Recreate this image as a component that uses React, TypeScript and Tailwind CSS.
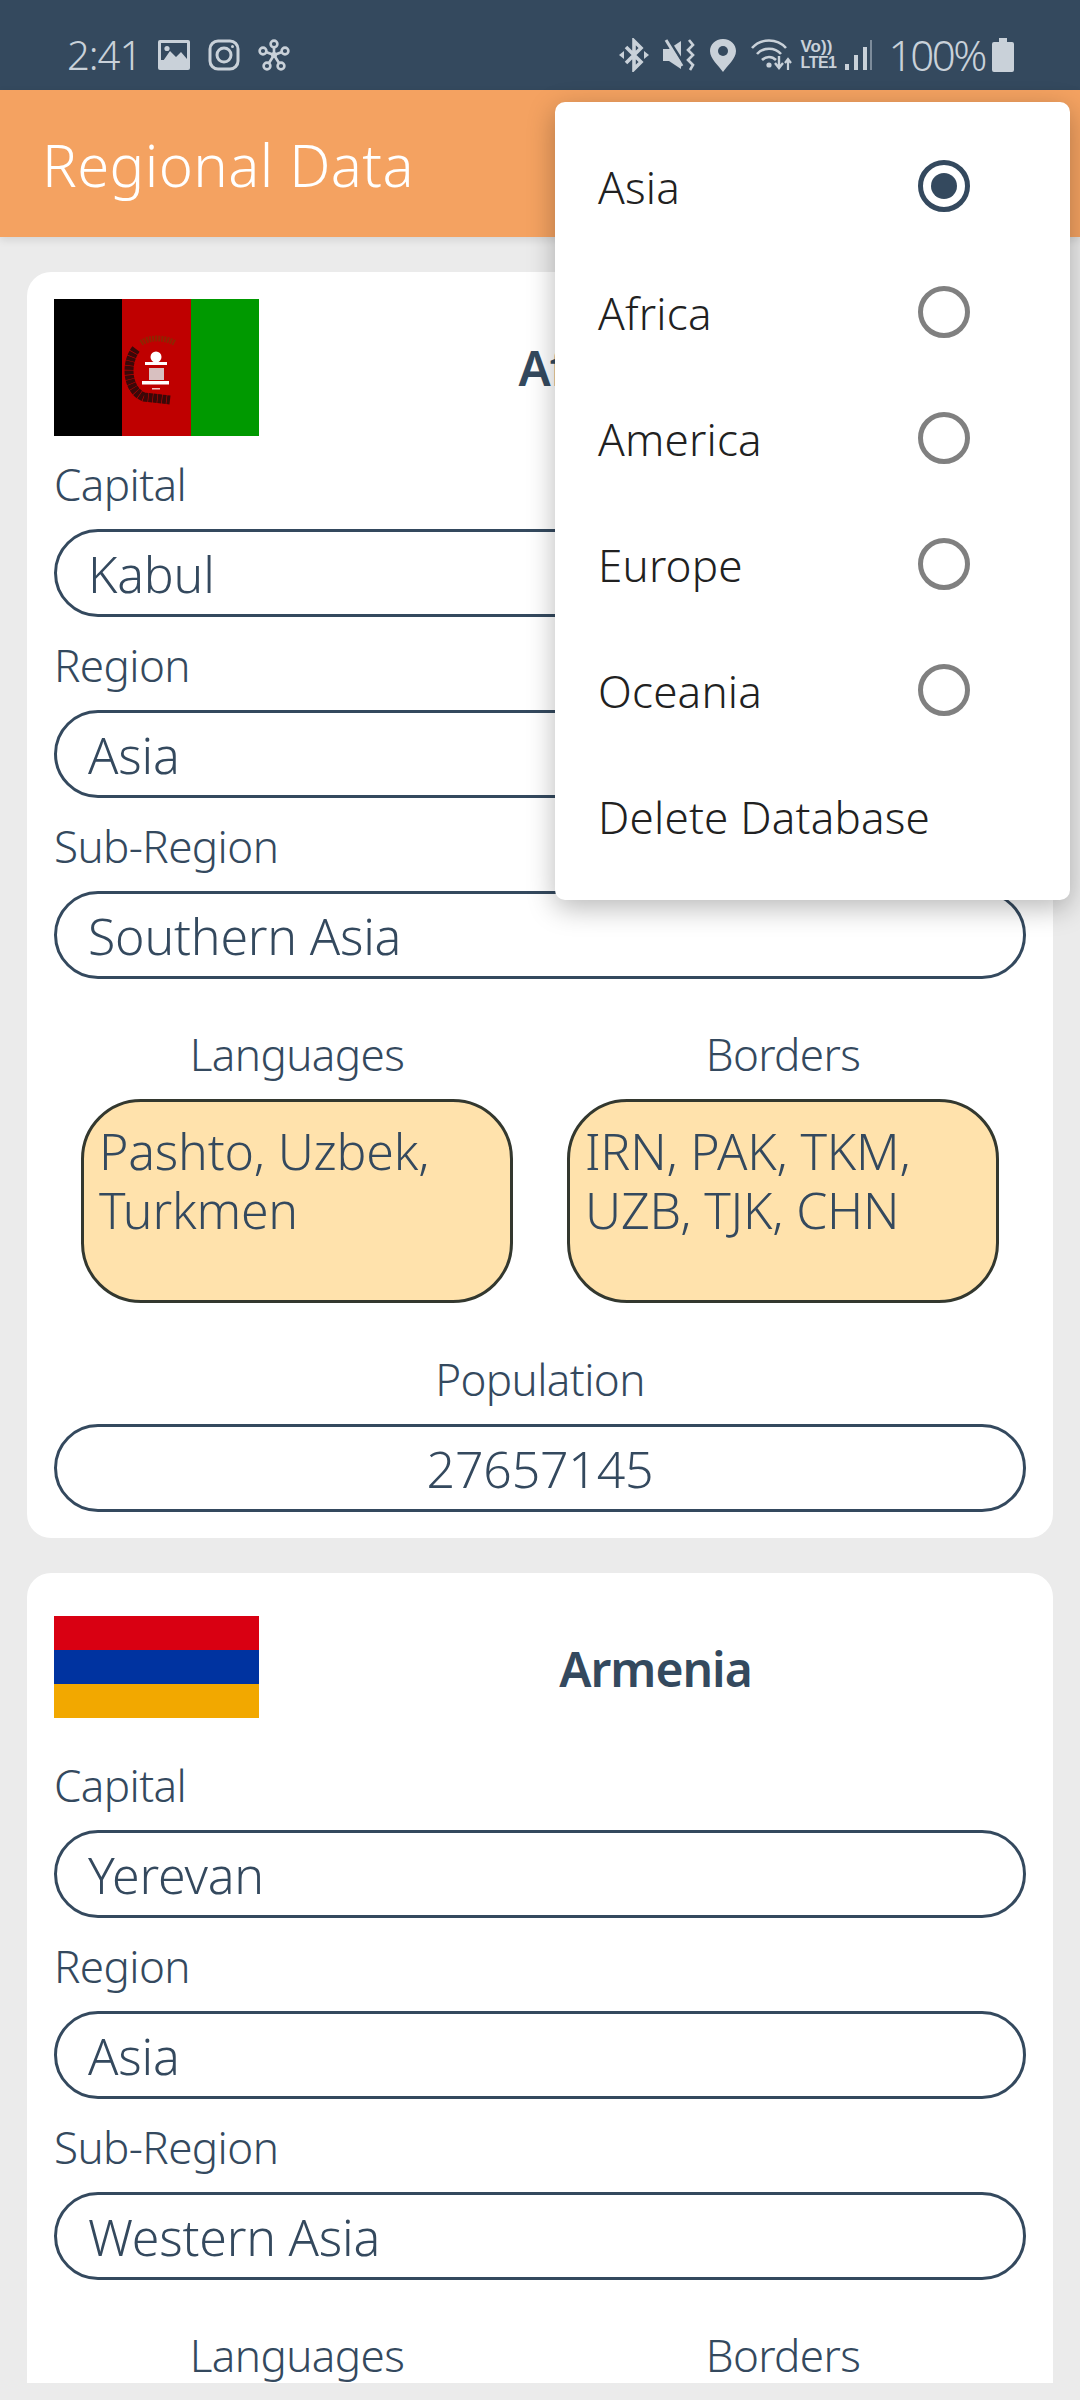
// App.tsx - Regional Data screen with the region menu open
const font = "font-['Noto_Sans',sans-serif]";

const regions = ['Asia', 'Africa', 'America', 'Europe', 'Oceania'];

function StatusBar() {
  return (
    <div className="h-[90px] bg-[#34495e] flex items-center justify-between pl-[67px] pr-[66px] pt-[20px] text-[#c9d1d9]">
      <div className="flex items-center">
        <span className="text-[40px] leading-none w-[73px] tracking-[-1px] font-[350]">2:41</span>
        <svg width="32" height="30" viewBox="0 0 32 30" className="ml-[18px]">
          <rect width="32" height="30" rx="2" fill="#c9d1d9" />
          <rect x="3" y="3" width="26" height="17" fill="#34495e" />
          <path d="M3 24 L12 11 L18 17 L23 12 L29 19 V24 Z" fill="#c9d1d9" />
          <circle cx="9" cy="8.5" r="2.6" fill="#c9d1d9" />
        </svg>
        <svg width="32" height="32" viewBox="0 0 32 32" fill="none" stroke="#c9d1d9" strokeWidth="3" className="ml-[18px]">
          <rect x="2" y="2" width="28" height="28" rx="8" />
          <circle cx="16" cy="16" r="7" />
          <circle cx="24.5" cy="7.5" r="1.5" fill="#c9d1d9" stroke="none" />
        </svg>
        <svg width="32" height="32" viewBox="0 0 32 32" fill="none" stroke="#c9d1d9" strokeWidth="2.6" className="ml-[18px]">
          <circle cx="16" cy="5" r="3.4" />
          <circle cx="5" cy="12" r="3.4" />
          <circle cx="27" cy="12" r="3.4" />
          <circle cx="9" cy="27" r="3.4" />
          <circle cx="23" cy="27" r="3.4" />
          <path d="M16 8 V16 M8 13 L16 16 L24 13 M11 24 L16 16 L21 24" />
          <circle cx="16" cy="16" r="3" fill="#c9d1d9" stroke="none" />
        </svg>
      </div>
      <div className="flex items-center">
        <svg width="30" height="34" viewBox="0 0 30 34" fill="none" stroke="#c9d1d9" strokeWidth="3.6">
          <path d="M7 9 L22 24 L15 31 V3 L22 10 L7 25" />
          <path d="M0 17 L5 13 V21 Z M30 17 L25 13 V21 Z" fill="#c9d1d9" stroke="none" />
        </svg>
        <svg width="32" height="34" viewBox="0 0 32 34" className="ml-[14px]">
          <path d="M0 11 H6 L18 3 V31 L6 23 H0 Z" fill="#c9d1d9" />
          <path d="M5 1 L21 26" stroke="#34495e" strokeWidth="3" />
          <path d="M3 2 L19 28" stroke="#c9d1d9" strokeWidth="3" />
          <path d="M26 2 L30 7 L25 12 L30 17 L25 22 L30 27 L27 32" fill="none" stroke="#c9d1d9" strokeWidth="2.6" />
        </svg>
        <svg width="26" height="33" viewBox="0 0 26 33" className="ml-[15px]">
          <path d="M13 0 C5 0 0 6 0 12 C0 20 9 27 13 33 C17 27 26 20 26 12 C26 6 21 0 13 0 Z" fill="#c9d1d9" />
          <circle cx="13" cy="12" r="5" fill="#34495e" />
        </svg>
        <svg width="41" height="33" viewBox="0 0 41 33" fill="none" stroke="#c9d1d9" strokeWidth="2.6" className="ml-[15px]">
          <path d="M1 9 C10 -1 26 -1 35 9" />
          <path d="M6 15 C12 8 24 8 30 15" />
          <path d="M11 21 C15 17 21 17 25 21" />
          <circle cx="18" cy="26" r="2.6" fill="#c9d1d9" stroke="none" />
          <path d="M28 17 V27 M24 24 L28 29 L32 24" strokeWidth="2.4" />
          <path d="M37 31 V21 M34 24 L37 20 L40 24" strokeWidth="2.2" />
        </svg>
        <div className="ml-[9px] w-[40px] flex flex-col items-start text-[#c9d1d9] font-['Liberation_Sans',sans-serif]">
          <span className="text-[17px] leading-[16px] font-bold">Vo))</span>
          <span className="text-[16px] leading-[16px] tracking-[-0.5px] font-bold">LTE1</span>
        </div>
        <svg width="28" height="32" viewBox="0 0 28 32" className="ml-[3px]">
          <rect x="1" y="25" width="4" height="6" fill="#c9d1d9" />
          <rect x="10" y="16" width="4" height="15" fill="#c9d1d9" />
          <rect x="19" y="8" width="4" height="23" fill="#c9d1d9" />
          <rect x="26" y="1" width="2" height="30" fill="#7d8c9b" />
        </svg>
        <span className="text-[42px] leading-none ml-[17px] tracking-[-2.4px] font-[350]">100%</span>
        <svg width="22" height="34" viewBox="0 0 22 34" className="ml-[7px]">
          <path d="M7 0 H15 V4 H20 Q22 4 22 6 V32 Q22 34 20 34 H2 Q0 34 0 32 V6 Q0 4 2 4 H7 Z" fill="#c9d1d9" />
        </svg>
      </div>
    </div>
  );
}

function AfghanFlag() {
  return (
    <svg width="205" height="137" viewBox="0 0 205 137" className="shrink-0 block">
      <rect width="68" height="137" fill="#000000" />
      <rect x="68" width="69" height="137" fill="#bf0000" />
      <rect x="137" width="68" height="137" fill="#009900" />
      <path d="M82 50 C70 66 74 92 90 98 L116 101" fill="none" stroke="#3a0808" strokeWidth="9" strokeDasharray="4 0.6" />
      <path d="M87 44 C96 38 110 38 121 44" fill="none" stroke="#8f2500" strokeWidth="6" strokeDasharray="2 1" />
      <circle cx="102" cy="58" r="5.5" fill="#ffffff" />
      <rect x="91" y="63" width="22" height="3" fill="#ffffff" />
      <rect x="95" y="69" width="15" height="12" fill="#d8c0c0" />
      <rect x="88" y="82" width="27" height="3.5" fill="#ffffff" />
      <rect x="98" y="89" width="8" height="1.5" fill="#f0c0c0" />
    </svg>
  );
}

function ArmeniaFlag() {
  return (
    <div className="w-[205px] h-[137px] shrink-0 flex flex-col justify-center pb-[3px]">
      <div className="h-[34px] bg-[#d90012]" />
      <div className="h-[34px] bg-[#0033a0]" />
      <div className="h-[34px] bg-[#f2a800]" />
    </div>
  );
}

function Label({ text, center }: { text: string; center?: boolean }) {
  return (
    <div className={`h-[93px] pt-[2px] flex items-center text-[44px] tracking-[-0.6px] font-[350] text-[#34495e] ${center ? 'justify-center' : ''}`}>
      {text}
    </div>
  );
}

function Pill({ text, center }: { text: string; center?: boolean }) {
  return (
    <div
      className={`h-[88px] pt-[2px] rounded-[44px] border-[3px] border-[#34495e] flex items-center text-[50px] tracking-[-0.2px] font-[350] text-[#34495e] ${
        center ? 'justify-center' : 'pl-[31px]'
      }`}
    >
      {text}
    </div>
  );
}

function InfoBox({ label, text }: { label: string; text?: string }) {
  return (
    <div>
      <Label text={label} center />
      {text && (
        <div className="mx-[27px] h-[204px] rounded-[60px] border-[3px] border-[#33382f] bg-[#ffe2ac] px-[15px] pt-[20px] text-[50px] leading-[59px] tracking-[-0.2px] font-[350] text-[#34495e]">
          {text}
        </div>
      )}
    </div>
  );
}

interface CardProps {
  name: string;
  flag: React.ReactNode;
  capital: string;
  region: string;
  subRegion: string;
  languages?: string;
  borders?: string;
  population?: string;
}

function CountryCard({ name, flag, capital, region, subRegion, languages, borders, population }: CardProps) {
  return (
    <div className="bg-white rounded-[24px] px-[27px] pt-[27px] pb-[26px]">
      <div className="flex items-center h-[137px]">
        {flag}
        <div className="flex-1 ml-[26px] text-center text-[48px] tracking-[-1px] font-semibold text-[#34495e]">{name}</div>
      </div>
      <Label text="Capital" />
      <Pill text={capital} />
      <Label text="Region" />
      <Pill text={region} />
      <Label text="Sub-Region" />
      <Pill text={subRegion} />
      <div className="mt-[27px] grid grid-cols-2">
        <InfoBox label="Languages" text={languages} />
        <InfoBox label="Borders" text={borders} />
      </div>
      {population && (
        <div className="mt-[28px]">
          <Label text="Population" center />
          <Pill text={population} center />
        </div>
      )}
    </div>
  );
}

function RegionMenu() {
  return (
    <div className="absolute left-[555px] top-[102px] w-[515px] py-[21px] bg-white rounded-[10px] shadow-[0_8px_28px_rgba(0,0,0,0.28)]">
      {regions.map((region, i) => (
        <div key={region} className="h-[126px] pl-[43px] flex items-center justify-between pr-[100px] text-[44px] tracking-[0.2px] font-[350] text-[#212121]">
          <span className="pt-[2px]">{region}</span>
          {i === 0 ? (
            <div className="w-[52px] h-[52px] rounded-full border-[5px] border-[#34495e] flex items-center justify-center">
              <div className="w-[26px] h-[26px] rounded-full bg-[#34495e]" />
            </div>
          ) : (
            <div className="w-[52px] h-[52px] rounded-full border-[5px] border-[#808080]" />
          )}
        </div>
      ))}
      <div className="h-[126px] pt-[2px] pl-[43px] flex items-center text-[44px] tracking-[0.2px] font-[350] text-[#212121]">Delete Database</div>
    </div>
  );
}

export default function App() {
  return (
    <div className={`relative w-[1080px] h-[2400px] overflow-hidden bg-[#ebebeb] ${font}`}>
      <StatusBar />
      <div className="h-[147px] pt-[2px] bg-[#f4a261] flex items-center pl-[42px] text-[58px] tracking-[0.4px] font-[350] text-white shadow-[0_3px_8px_rgba(0,0,0,0.1)] relative">
        Regional Data
      </div>
      <div className="h-[2146px] overflow-hidden px-[27px] pt-[35px] flex flex-col gap-[35px]">
        <CountryCard
          name="Afghanistan"
          flag={<AfghanFlag />}
          capital="Kabul"
          region="Asia"
          subRegion="Southern Asia"
          languages="Pashto, Uzbek, Turkmen"
          borders="IRN, PAK, TKM, UZB, TJK, CHN"
          population="27657145"
        />
        <CountryCard
          name="Armenia"
          flag={<ArmeniaFlag />}
          capital="Yerevan"
          region="Asia"
          subRegion="Western Asia"
        />
      </div>
      <RegionMenu />
    </div>
  );
}
